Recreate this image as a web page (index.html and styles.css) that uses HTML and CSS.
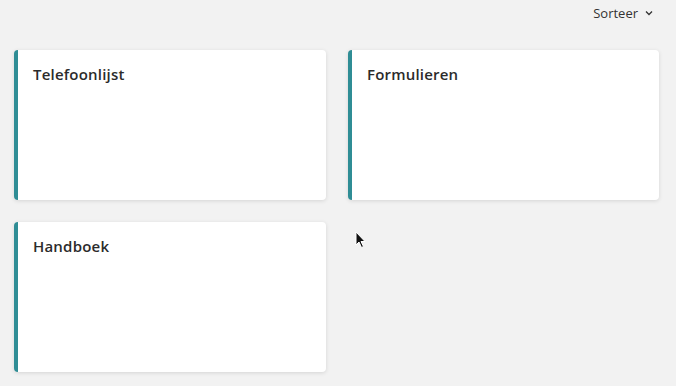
FILE: index.html
```html
<!DOCTYPE html>
<html>
<head>
<meta charset="utf-8">
<link rel="stylesheet" href="styles.css">
</head>
<body>
<div class="page">
  <div class="toolbar">
    <button class="sort">Sorteer
      <svg class="chev" width="10" height="10" viewBox="0 0 10 10"><path d="M2 3.5 L5 6.5 L8 3.5" fill="none" stroke="#333" stroke-width="1.3"/></svg>
    </button>
  </div>
  <div class="grid">
    <div class="card"><h2 class="title">Telefoonlijst</h2></div>
    <div class="card"><h2 class="title">Formulieren</h2></div>
    <div class="card"><h2 class="title">Handboek</h2></div>
  </div>
  <svg class="cursor" width="12" height="18" viewBox="0 0 12 18"><path d="M1 1 L1 14 L4 11 L6.5 16.5 L8.5 15.5 L6 10.5 L10 10.5 Z" fill="#111" stroke="#fff" stroke-width="1"/></svg>
</div>
</body>
</html>
```

FILE: styles.css
```css
html, body {
  margin: 0;
  padding: 0;
  background: #f2f2f2;
  font-family: "Open Sans", "Noto Sans", sans-serif;
  color: #2b2b2b;
}
.page {
  position: relative;
  width: 676px;
  height: 386px;
  overflow: hidden;
}
.toolbar {
  display: flex;
  justify-content: flex-end;
  height: 28px;
  padding: 0 22px 0 0;
  align-items: center;
}
.sort {
  border: 0;
  background: none;
  font-family: inherit;
  font-size: 13px;
  color: #333;
  display: flex;
  align-items: center;
  gap: 6px;
  padding: 0;
  margin-top: -2px;
}
.grid {
  display: grid;
  grid-template-columns: 312px 311px;
  grid-auto-rows: 150px;
  column-gap: 22px;
  row-gap: 22px;
  padding: 22px 0 0 14px;
}
.card {
  background: #fff;
  border-left: 4px solid #2f8d95;
  border-radius: 4px;
  box-shadow: 0 1px 4px rgba(0,0,0,0.12);
  padding: 14px 15px;
}
.title {
  margin: 0;
  font-size: 15px;
  font-weight: 600;
  letter-spacing: 0.2px;
  color: #2b2b2b;
  line-height: 20px;
}
.cursor {
  position: absolute;
  left: 355px;
  top: 231px;
}
```
